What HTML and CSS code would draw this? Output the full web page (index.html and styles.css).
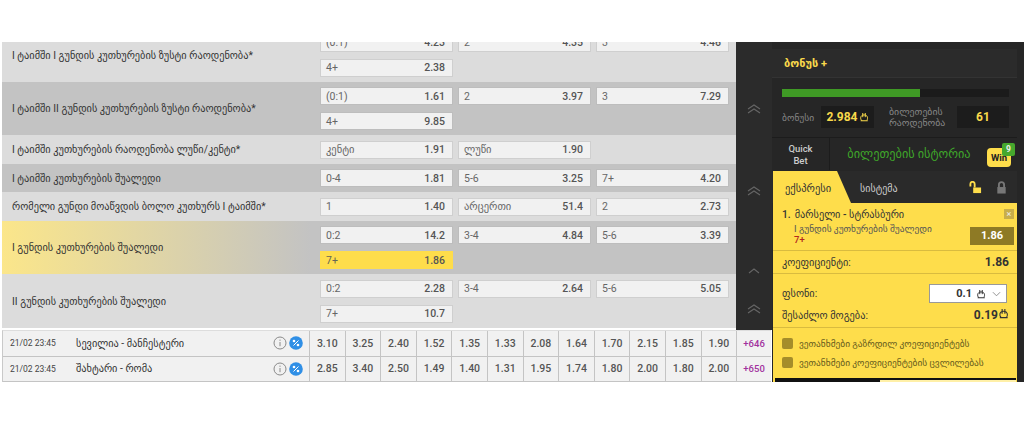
FILE: index.html
```html
<!DOCTYPE html>
<html lang="ka">
<head>
<meta charset="utf-8">
<title>ფსონები</title>
<link rel="stylesheet" href="styles.css">
</head>
<body>
<div class="page">
  <div class="stage">
    <section class="markets">
      <div class="rail">
        <svg class="chev c1" viewBox="0 0 14 10"><path d="M1 5l6-4 6 4M1 9l6-4 6 4"/></svg>
        <svg class="chev c2" viewBox="0 0 14 10"><path d="M1 5l6-4 6 4M1 9l6-4 6 4"/></svg>
        <svg class="chev c3" viewBox="0 0 14 10"><path d="M2 7l5-4 5 4"/></svg>
        <svg class="chev c4" viewBox="0 0 14 10"><path d="M1 5l6-4 6 4M1 9l6-4 6 4"/></svg>
      </div>
      <div class="rows">
        <div class="row light tall first"><div class="label">I ტაიმში I გუნდის კუთხურების ზუსტი რაოდენობა*</div>
          <div class="odds">
            <div class="odd"><span>(0:1)</span><b>4.23</b></div><div class="odd"><span>2</span><b>4.35</b></div><div class="odd"><span>3</span><b>4.46</b></div>
            <div class="odd"><span>4+</span><b>2.38</b></div>
          </div></div>
        <div class="row dark tall"><div class="label">I ტაიმში II გუნდის კუთხურების ზუსტი რაოდენობა*</div>
          <div class="odds">
            <div class="odd"><span>(0:1)</span><b>1.61</b></div><div class="odd"><span>2</span><b>3.97</b></div><div class="odd"><span>3</span><b>7.29</b></div>
            <div class="odd"><span>4+</span><b>9.85</b></div>
          </div></div>
        <div class="row light"><div class="label">I ტაიმში კუთხურების რაოდენობა ლუწი/კენტი*</div>
          <div class="odds">
            <div class="odd"><span>კენტი</span><b>1.91</b></div><div class="odd"><span>ლუწი</span><b>1.90</b></div>
          </div></div>
        <div class="row dark"><div class="label">I ტაიმში კუთხურების შუალედი</div>
          <div class="odds">
            <div class="odd"><span>0-4</span><b>1.81</b></div><div class="odd"><span>5-6</span><b>3.25</b></div><div class="odd"><span>7+</span><b>4.20</b></div>
          </div></div>
        <div class="row light"><div class="label">რომელი გუნდი მოაწვდის ბოლო კუთხურს I ტაიმში*</div>
          <div class="odds">
            <div class="odd"><span>1</span><b>1.40</b></div><div class="odd"><span>არცერთი</span><b>51.4</b></div><div class="odd"><span>2</span><b>2.73</b></div>
          </div></div>
        <div class="row dark tall picked"><div class="label">I გუნდის კუთხურების შუალედი</div>
          <div class="odds">
            <div class="odd"><span>0:2</span><b>14.2</b></div><div class="odd"><span>3-4</span><b>4.84</b></div><div class="odd"><span>5-6</span><b>3.39</b></div>
            <div class="odd on"><span>7+</span><b>1.86</b></div>
          </div></div>
        <div class="row light tall"><div class="label">II გუნდის კუთხურების შუალედი</div>
          <div class="odds">
            <div class="odd"><span>0:2</span><b>2.28</b></div><div class="odd"><span>3-4</span><b>2.64</b></div><div class="odd"><span>5-6</span><b>5.05</b></div>
            <div class="odd"><span>7+</span><b>10.7</b></div>
          </div></div>
      </div>
    </section>

    <div class="events">
      <div class="event">
        <div class="date">21/02 23:45</div><div class="teams">სევილია - მანჩესტერი</div>
        <div class="icons"><svg class="info" viewBox="0 0 14 14"><circle cx="7" cy="7" r="6"/><path d="M7 6v4.200M7 3.600v1.200"/></svg><svg class="pct" viewBox="0 0 14 14"><circle class="disc" cx="7" cy="7" r="6.800"/><circle class="dot" cx="5" cy="5" r="1.300"/><circle class="dot" cx="9" cy="9" r="1.300"/><path d="M9.500 4.500l-5 5"/></svg></div>
        <div class="n">3.10</div><div class="n">3.25</div><div class="n">2.40</div><div class="n">1.52</div><div class="n">1.35</div><div class="n">1.33</div><div class="n">2.08</div><div class="n">1.64</div><div class="n">1.70</div><div class="n">2.15</div><div class="n">1.85</div><div class="n">1.90</div><div class="more">+646</div>
      </div>
      <div class="event">
        <div class="date">21/02 23:45</div><div class="teams">შახტარი - რომა</div>
        <div class="icons"><svg class="info" viewBox="0 0 14 14"><circle cx="7" cy="7" r="6"/><path d="M7 6v4.200M7 3.600v1.200"/></svg><svg class="pct" viewBox="0 0 14 14"><circle class="disc" cx="7" cy="7" r="6.800"/><circle class="dot" cx="5" cy="5" r="1.300"/><circle class="dot" cx="9" cy="9" r="1.300"/><path d="M9.500 4.500l-5 5"/></svg></div>
        <div class="n">2.85</div><div class="n">3.40</div><div class="n">2.50</div><div class="n">1.49</div><div class="n">1.40</div><div class="n">1.31</div><div class="n">1.95</div><div class="n">1.74</div><div class="n">1.80</div><div class="n">2.00</div><div class="n">1.80</div><div class="n">2.00</div><div class="more">+650</div>
      </div>
    </div>
  </div>

  <aside class="side">
    <div class="bonus-title">ბონუს +</div>
    <div class="bonus-box">
      <div class="track"><div class="fill"></div></div>
      <div class="stats">
        <span class="stat-l w1">ბონუსი</span><span class="stat-v v1">2.984<svg class="lari" viewBox="0 0 12 12"><path d="M2 10.500h8.500M3.500 10.500C1 8.500 1.500 3.500 6 3.500s5 4 3.500 6.500M4.500 1.200v5M7.500 1.200v5"/></svg></span>
        <span class="stat-l w2">ბილეთების რაოდენობა</span><span class="stat-v v2">61</span>
      </div>
    </div>
    <div class="quick">
      <div class="qb">Quick<br>Bet</div>
      <div class="hist">ბილეთების ისტორია</div>
      <div class="win">Win<i>9</i></div>
    </div>
    <div class="tabs">
      <div class="tab-on">ექსპრესი</div>
      <div class="tab-off">სისტემა</div>
      <svg class="lock open" viewBox="0 0 14 14"><path class="sh" d="M1.500 6V3.200a2.300 2.300 0 0 1 4.600 0V7"/><rect x="4.500" y="7" width="8.500" height="6"/></svg>
      <svg class="lock shut" viewBox="0 0 14 14"><path class="sh" d="M4.200 7V4a2.800 2.800 0 0 1 5.600 0v3"/><rect x="2.500" y="6.500" width="9" height="7"/></svg>
    </div>
    <div class="slip">
      <div class="pick">
        <div class="pick-t"><span class="no">1.</span>მარსელი - სტრასბური</div>
        <div class="pick-m">I გუნდის კუთხურების შუალედი</div>
        <div class="pick-s">7+</div>
        <div class="pick-x">×</div>
        <div class="pick-o">1.86</div>
      </div>
      <div class="line"><span>კოეფიციენტი:</span><b>1.86</b></div>
      <div class="stake">
        <span>ფსონი:</span>
        <div class="input"><b>0.1</b><svg class="lari" viewBox="0 0 12 12"><path d="M2 10.500h8.500M3.500 10.500C1 8.500 1.500 3.500 6 3.500s5 4 3.500 6.500M4.500 1.200v5M7.500 1.200v5"/></svg><svg class="caret" viewBox="0 0 10 6"><path d="M1 1l4 4 4-4"/></svg></div>
      </div>
      <div class="gain"><span>შესაძლო მოგება:</span><b>0.19<svg class="lari" viewBox="0 0 12 12"><path d="M2 10.500h8.500M3.500 10.500C1 8.500 1.500 3.500 6 3.500s5 4 3.500 6.500M4.500 1.200v5M7.500 1.200v5"/></svg></b></div>
      <div class="checks">
        <div class="check"><i></i>ვეთანხმები გაზრდილ კოეფიციენტებს</div>
        <div class="check"><i></i>ვეთანხმები კოეფიციენტების ცვლილებას</div>
      </div>
    </div>
    <div class="foot"><div class="foot-a"></div><div class="foot-b"></div></div>
  </aside>
</div>
</body>
</html>
```

FILE: styles.css
```css
* { box-sizing: border-box; }
html, body { margin: 0; padding: 0; background: #fff; }
body { font-family: "Roboto", "DejaVu Sans", sans-serif; color: #333; height: 421px; overflow: hidden; }
.page { display: flex; padding-top: 42px; height: 382px; }

.stage { width: 772px; flex: none; display: flex; flex-direction: column; }
.markets { height: 288px; display: flex; flex-direction: row-reverse; overflow: hidden; padding-left: 2px; }
.rail { width: 36px; flex: none; background: #2b2b2b; position: relative; }
.chev { position: absolute; left: 11px; width: 14px; height: 10px; fill: none; stroke: #666; stroke-width: 1.100; }
.c1 { top: 62px; } .c2 { top: 144px; } .c3 { top: 224px; } .c4 { top: 262px; }
.rows { width: 734px; flex: none; }
.row { display: flex; align-items: center; padding: 0 7px 0 10px; }
.row.light { background: #dcdcdc; height: 29px; }
.row.dark { background: #c3c3c3; height: 28px; }
.row.light.tall { height: 54px; }
.row.dark.tall { height: 53px; }
.row.first { margin-top: -14px; }
.row.picked { background: linear-gradient(90deg, #fbe68a 0%, #c3c3c3 42%); }
.label { width: 308px; flex: none; font-size: 10.300px; color: #333; }
.odds { flex: 1; display: grid; grid-template-columns: repeat(3, 133px); gap: 7px 5px; }
.odd { height: 18px; display: flex; justify-content: space-between; align-items: center; padding: 0 7px 0 5px; background: #f1f1f1; border: 1px solid #cfcfcf; font-size: 10.500px; color: #666; }
.row.dark .odd { border-color: #bdbdbd; }
.odd b { font-weight: 500; font-size: 10.500px; color: #555; }
.odd.on, .row.dark .odd.on { background: #fedd4b; border-color: #fedd4b; color: #665; }

.events { margin-left: 2px; width: 769px; height: 52px; border-left: 1px solid #c9c9c9; border-top: 1px solid #ddd; }
.event { height: 25.500px; display: flex; align-items: stretch; background: #f1f1f1; border-bottom: 1px solid #c4c4c4; font-size: 11px; }
.date { width: 70px; padding: 0 0 0 7px; display: flex; align-items: center; font-size: 8.500px; color: #444; flex: none; }
.teams { width: 197px; flex: none; display: flex; align-items: center; padding-left: 3px; font-size: 10.300px; color: #333; }
.icons { width: 40px; flex: none; display: flex; align-items: center; gap: 2px; padding-left: 3px; border-right: 1px solid #c4c4c4; }
.icons svg { width: 14px; height: 14px; flex: none; }
.info { fill: none; stroke: #8a8a8a; stroke-width: 1; }
.pct .disc { fill: #2f8fe6; }
.pct .dot { fill: #fff; }
.pct path { stroke: #fff; stroke-width: 1; fill: none; }
.n { width: 35.600px; flex: none; display: flex; align-items: center; justify-content: center; border-right: 1px solid #c4c4c4; font-weight: 500; font-size: 10.500px; color: #555; }
.more { flex: 1; display: flex; align-items: center; justify-content: center; font-size: 9.500px; font-weight: 500; color: #a2319e; }

.side { width: 252px; flex: none; background: #262626; height: 340px; display: flex; flex-direction: column; padding: 7px 7px 0 0; overflow: hidden; }
.bonus-title { padding-left: 12px; height: 28px; flex: none; display: flex; align-items: center; font-size: 11px; font-weight: 700; color: #f9d94b; background: #2b2b2b; }
.bonus-box { border-top: 1px solid #333; padding: 11px 8px 0 10px; height: 60px; flex: none; }
.track { height: 8px; background: #1b1b1b; }
.fill { width: 61%; height: 100%; background: #3f9a25; }
.stats { display: flex; align-items: center; margin-top: 9px; font-size: 9.500px; color: #858585; }
.stat-l.w1 { width: 39px; flex: none; }
.stat-l.w2 { flex: none; padding-left: 15px; width: 83px; line-height: 11px; font-size: 9.800px; white-space: normal; }
.stat-v { background: #1c1c1c; height: 22px; flex: none; display: flex; align-items: center; justify-content: center; font-weight: 700; font-size: 12px; color: #f9d94b; }
.stat-v.v1 { width: 53px; } .stat-v.v2 { width: 52px; }
.lari { width: 10px; height: 10px; fill: none; stroke: currentColor; stroke-width: 1.200; margin-left: 1px; }
.quick { display: flex; align-items: center; height: 33px; flex: none; border-top: 1px solid #1c1c1c; font-size: 9.500px; }
.qb { width: 58px; flex: none; text-align: center; line-height: 12px; color: #ccc; font-weight: 500; border-right: 1px solid #1c1c1c; height: 100%; padding-top: 5px; }
.hist { flex: 1; text-align: center; font-size: 12.300px; color: #3fa52a; white-space: nowrap; padding-left: 1px; }
.win { width: 24px; height: 19px; margin: 6px 6px 0 0; position: relative; background: #fedd4b; border-radius: 4px; color: #222; font-weight: 700; font-size: 9.500px; display: flex; align-items: center; justify-content: center; flex: none; }
.win i { position: absolute; right: -4px; top: -5px; width: 13px; height: 13px; background: #46a82d; color: #eee; border-radius: 2px; font-style: normal; font-size: 8.500px; text-align: center; line-height: 13px; }
.tabs { display: flex; align-items: center; height: 32px; margin-top: 1px; flex: none; padding-left: 1px; background: #2a2a2a; }
.tab-on { width: 78px; height: 100%; flex: none; background: #fedd4b; clip-path: polygon(0 0, 64px 0, 100% 100%, 0 100%); padding: 3px 0 0 12px; font-size: 10.500px; display: flex; align-items: center; color: #333; }
.tab-off { padding-left: 9px; padding-top: 2px; font-size: 10px; color: #ccc; flex: 1; }
.lock { width: 13px; height: 13px; flex: none; }
.lock .sh { fill: none; stroke-width: 2; }
.open .sh { stroke: #fedd4b; } .open rect { fill: #fedd4b; }
.shut { margin-left: 13px; margin-right: 9px; } .shut .sh { stroke: #777; } .shut rect { fill: #777; }

.slip { background: #fedd4b; height: 175px; flex: none; margin-left: 1px; color: #444; display: flex; flex-direction: column; font-size: 10.300px; }
.pick { position: relative; height: 48px; flex: none; padding: 6px 6px 0 9px; border-bottom: 1px solid #d9bb3f; }
.pick-t { font-size: 10.300px; color: #333; font-weight: 500; line-height: 12px; }
.no { margin-right: 4px; }
.pick-m { font-size: 9.400px; color: #555; padding-left: 12px; margin-top: 2px; line-height: 11px; }
.pick-s { font-size: 9.500px; color: #b3271e; padding-left: 12px; font-weight: 500; line-height: 11px; }
.pick-x { position: absolute; right: 3px; top: 6px; width: 10px; height: 10px; background: #c8ae4a; color: #eee; text-align: center; font-size: 9px; line-height: 10px; }
.pick-o { position: absolute; right: 3px; top: 24px; width: 44px; height: 18px; background: #8e7a25; color: #fff; font-weight: 700; font-size: 11px; text-align: center; line-height: 18px; }
.line { display: flex; justify-content: space-between; align-items: center; height: 23px; flex: none; padding: 0 8px 0 9px; border-bottom: 1px solid #d9bb3f; color: #333; }
.line b, .gain b { font-size: 12px; font-weight: 700; color: #333; }
.stake { display: flex; justify-content: space-between; align-items: center; padding: 10px 10px 0 9px; height: 29px; flex: none; color: #333; }
.input { width: 78px; height: 19px; background: #fff; border: 1px solid #999; display: flex; align-items: center; justify-content: flex-end; padding-right: 5px; color: #333; }
.input b { font-size: 11px; }
.input .lari { margin: 0 6px 0 4px; }
.caret { width: 9px; height: 6px; fill: none; stroke: #888; }
.gain { display: flex; justify-content: space-between; align-items: center; height: 25px; flex: none; padding: 0 8px 0 9px; border-bottom: 1px solid #d9bb3f; color: #333; }
.gain .lari { width: 11px; height: 11px; margin: 0; }
.checks { padding: 6px 0 0 9px; font-size: 9.400px; color: #665c1d; }
.check { display: flex; align-items: center; height: 19px; white-space: nowrap; }
.check i { width: 11px; height: 11px; background: #a58d2a; border-radius: 2px; margin-right: 6px; flex: none; }
.foot { height: 4px; flex: none; display: flex; margin-left: 1px; padding: 0 1px 0 2px; background: #fedd4b; }
.foot-a { width: 105px; background: #111; }
.foot-b { flex: 1; background: linear-gradient(#111 50%, #fff0a8 50%); }
```
